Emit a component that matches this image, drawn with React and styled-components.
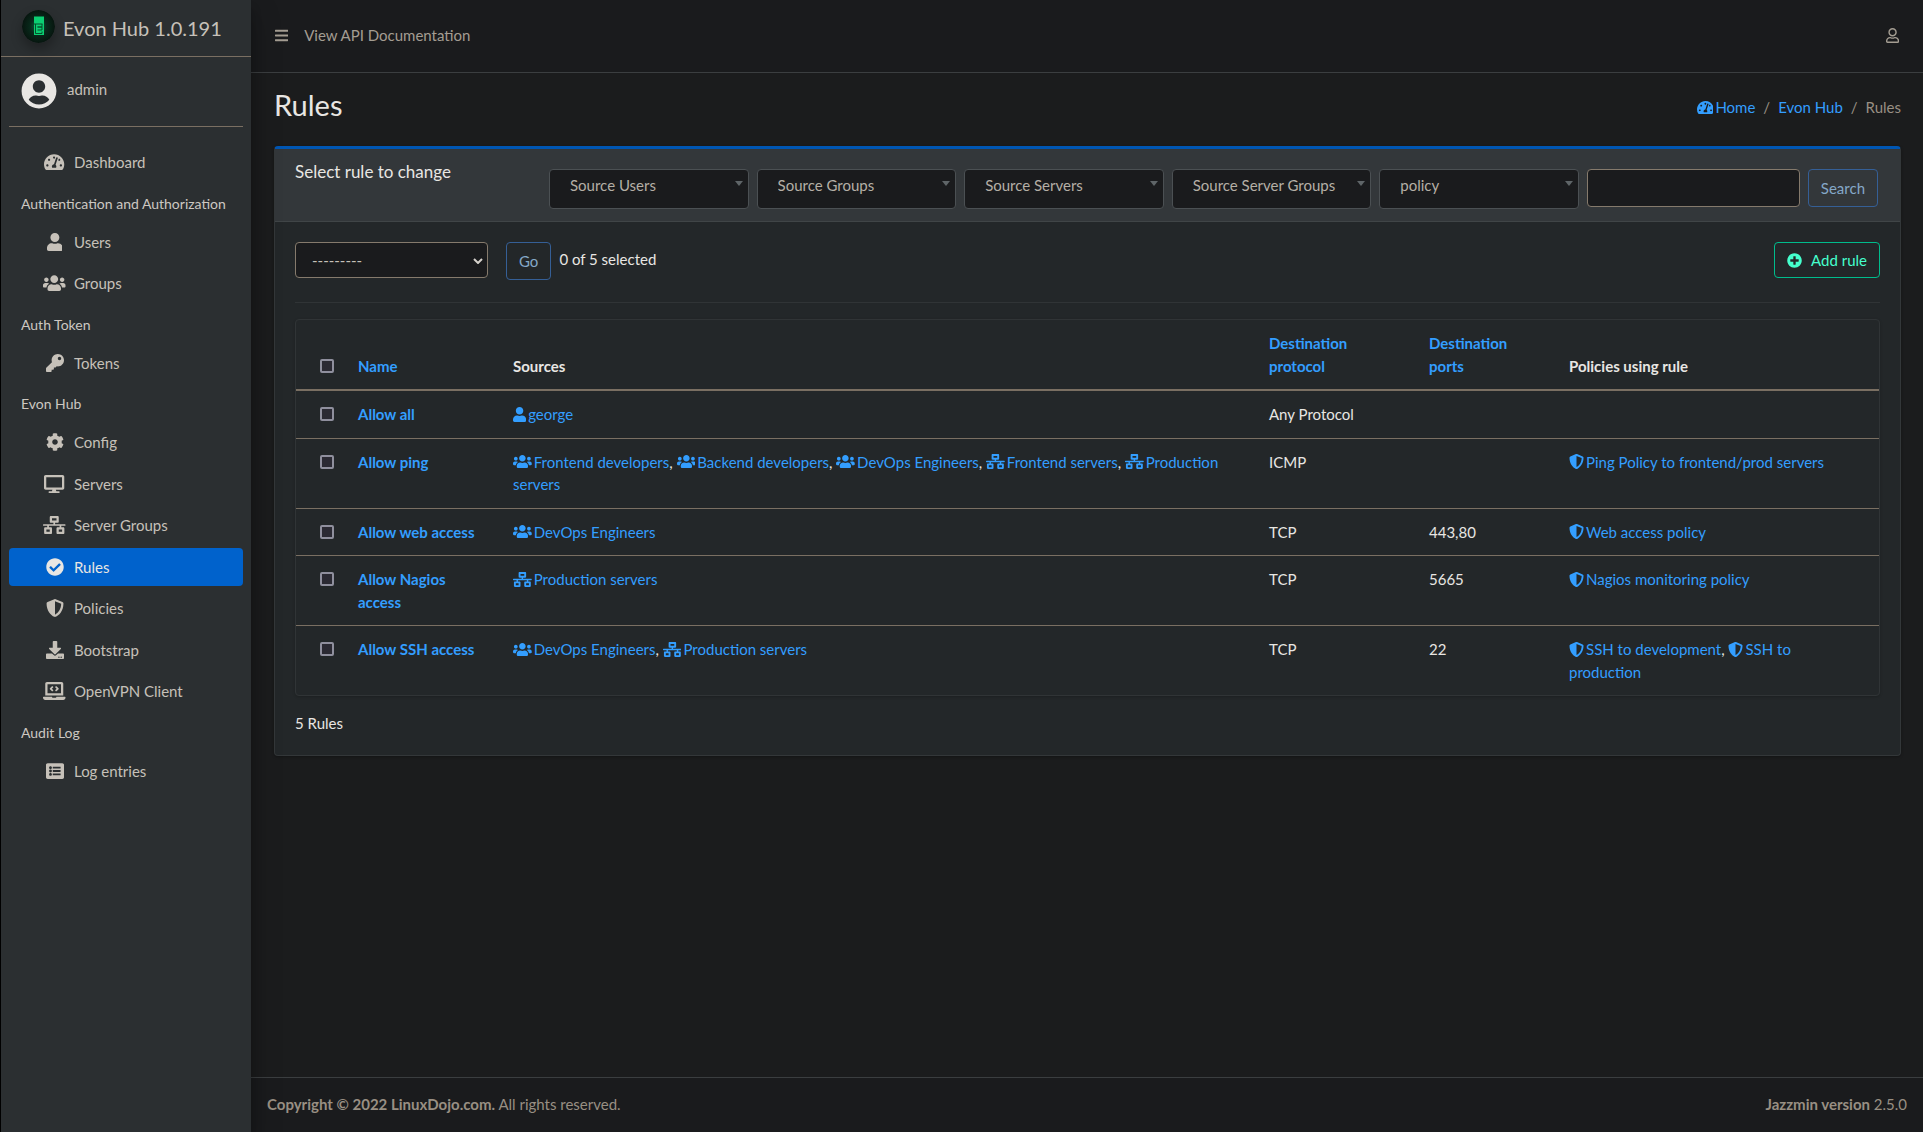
import React, { useState } from "react";
import styled, { createGlobalStyle } from "styled-components";
//Icons
import {
  FaBars,
  FaCheckCircle,
  FaCog,
  FaDesktop,
  FaDownload,
  FaKey,
  FaLaptopCode,
  FaListAlt,
  FaNetworkWired,
  FaPlusCircle,
  FaRegUser,
  FaShieldAlt,
  FaTachometerAlt,
  FaUser,
  FaUserCircle,
  FaUsers,
} from "react-icons/fa";

const menu = [
  { items: [{ label: "Dashboard", icon: FaTachometerAlt }] },
  {
    title: "Authentication and Authorization",
    items: [
      { label: "Users", icon: FaUser },
      { label: "Groups", icon: FaUsers },
    ],
  },
  { title: "Auth Token", items: [{ label: "Tokens", icon: FaKey }] },
  {
    title: "Evon Hub",
    items: [
      { label: "Config", icon: FaCog },
      { label: "Servers", icon: FaDesktop },
      { label: "Server Groups", icon: FaNetworkWired },
      { label: "Rules", icon: FaCheckCircle, active: true },
      { label: "Policies", icon: FaShieldAlt },
      { label: "Bootstrap", icon: FaDownload },
      { label: "OpenVPN Client", icon: FaLaptopCode },
    ],
  },
  { title: "Audit Log", items: [{ label: "Log entries", icon: FaListAlt }] },
];

const filters = [
  "Source Users",
  "Source Groups",
  "Source Servers",
  "Source Server Groups",
  "policy",
];

const kinds = {
  user: FaUser,
  group: FaUsers,
  servers: FaNetworkWired,
  policy: FaShieldAlt,
};

const rules = [
  {
    name: "Allow all",
    sources: [["user", "george"]],
    protocol: "Any Protocol",
    ports: "",
    policies: [],
  },
  {
    name: "Allow ping",
    sources: [
      ["group", "Frontend developers"],
      ["group", "Backend developers"],
      ["group", "DevOps Engineers"],
      ["servers", "Frontend servers"],
      ["servers", "Production servers"],
    ],
    protocol: "ICMP",
    ports: "",
    policies: [["policy", "Ping Policy to frontend/prod servers"]],
  },
  {
    name: "Allow web access",
    sources: [["group", "DevOps Engineers"]],
    protocol: "TCP",
    ports: "443,80",
    policies: [["policy", "Web access policy"]],
  },
  {
    name: "Allow Nagios access",
    sources: [["servers", "Production servers"]],
    protocol: "TCP",
    ports: "5665",
    policies: [["policy", "Nagios monitoring policy"]],
  },
  {
    name: "Allow SSH access",
    sources: [
      ["group", "DevOps Engineers"],
      ["servers", "Production servers"],
    ],
    protocol: "TCP",
    ports: "22",
    policies: [
      ["policy", "SSH to development"],
      ["policy", "SSH to production"],
    ],
  },
];

function App() {
  const [selected, setSelected] = useState([]);

  const toggle = (name) =>
    setSelected((prev) =>
      prev.includes(name) ? prev.filter((n) => n !== name) : [...prev, name]
    );
  const toggleAll = () =>
    setSelected(selected.length === rules.length ? [] : rules.map((r) => r.name));

  return (
    <>
      <GlobalStyle />
      <Layout>
        <Sidebar />
        <Page>
          <Navbar>
            <button type="button" aria-label="Toggle sidebar">
              <FaBars />
            </button>
            <a href="#docs">View API Documentation</a>
            <button type="button" aria-label="Account">
              <FaRegUser />
            </button>
          </Navbar>
          <Content>
            <PageHeader>
              <h1>Rules</h1>
              <Breadcrumb>
                <li>
                  <IconLink href="#home">
                    <FaTachometerAlt />
                    Home
                  </IconLink>
                </li>
                <li>
                  <a href="#evon">Evon Hub</a>
                </li>
                <li>Rules</li>
              </Breadcrumb>
            </PageHeader>
            <Card>
              <CardHeader>
                <h2>Select rule to change</h2>
                <Search onSubmit={(e) => e.preventDefault()}>
                  <Filters>
                    {filters.map((name) => (
                      <FilterBox key={name}>
                        <select aria-label={name}>
                          <option>{name}</option>
                        </select>
                      </FilterBox>
                    ))}
                  </Filters>
                  <SearchInput type="text" aria-label="Search rules" />
                  <OutlineButton type="submit">Search</OutlineButton>
                </Search>
              </CardHeader>
              <CardBody>
                <Actions>
                  <ActionBox>
                    <select aria-label="Action">
                      <option>---------</option>
                    </select>
                    <svg width="10" height="6" viewBox="0 0 10 6">
                      <path d="M1 1l4 4 4-4" />
                    </svg>
                  </ActionBox>
                  <OutlineButton type="button">Go</OutlineButton>
                  <span>
                    {selected.length} of {rules.length} selected
                  </span>
                  <AddLink href="#add">
                    <FaPlusCircle />
                    Add rule
                  </AddLink>
                </Actions>
                <TableCard>
                  <Table>
                    <colgroup>
                      <col width="50" />
                      <col width="155" />
                      <col />
                      <col width="160" />
                      <col width="140" />
                      <col width="322" />
                    </colgroup>
                    <thead>
                      <tr>
                        <th>
                          <Check
                            type="checkbox"
                            aria-label="Select all rules"
                            checked={selected.length === rules.length}
                            onChange={toggleAll}
                          />
                        </th>
                        <th>
                          <a href="#name">Name</a>
                        </th>
                        <th>Sources</th>
                        <th>
                          <a href="#protocol">Destination protocol</a>
                        </th>
                        <th>
                          <a href="#ports">Destination ports</a>
                        </th>
                        <th>Policies using rule</th>
                      </tr>
                    </thead>
                    <tbody>
                      {rules.map((rule) => (
                        <tr key={rule.name}>
                          <td>
                            <Check
                              type="checkbox"
                              aria-label={rule.name}
                              checked={selected.includes(rule.name)}
                              onChange={() => toggle(rule.name)}
                            />
                          </td>
                          <th scope="row">
                            <a href="#rule">{rule.name}</a>
                          </th>
                          <td>
                            <Links list={rule.sources} />
                          </td>
                          <td>{rule.protocol}</td>
                          <td>{rule.ports}</td>
                          <td>
                            <Links list={rule.policies} />
                          </td>
                        </tr>
                      ))}
                    </tbody>
                  </Table>
                </TableCard>
                <p>{rules.length} Rules</p>
              </CardBody>
            </Card>
          </Content>
          <Footer>
            <span>
              <strong>Copyright © 2022 LinuxDojo.com.</strong> All rights
              reserved.
            </span>
            <span>
              <strong>Jazzmin version</strong> 2.5.0
            </span>
          </Footer>
        </Page>
      </Layout>
    </>
  );
}

//Sidebar component
const Sidebar = () => {
  return (
    <Side>
      <Brand href="#home">
        <Logo />
        Evon Hub 1.0.191
      </Brand>
      <UserPanel href="#admin">
        <FaUserCircle />
        <span>admin</span>
      </UserPanel>
      <nav>
        {menu.map(({ title, items }, i) => (
          <React.Fragment key={i}>
            {title && <NavTitle>{title}</NavTitle>}
            {items.map(({ label, icon: Icon, active }) => (
              <NavLink href="#nav" key={label} $active={active}>
                <i>
                  <Icon />
                </i>
                {label}
              </NavLink>
            ))}
          </React.Fragment>
        ))}
      </nav>
    </Side>
  );
};

//Comma separated links, each with its icon
const Links = ({ list }) =>
  list.map(([kind, label], i) => {
    const Icon = kinds[kind];
    return (
      <React.Fragment key={label}>
        {i > 0 && ", "}
        <IconLink href={`#${kind}`}>
          <Icon />
          {label}
        </IconLink>
      </React.Fragment>
    );
  });

const Logo = () => (
  <LogoSvg viewBox="0 0 33 33">
    <defs>
      <radialGradient id="glow">
        <stop offset="0" stopColor="#0a6b3f" />
        <stop offset="0.5" stopColor="#082a1b" />
        <stop offset="1" stopColor="#07150f" />
      </radialGradient>
    </defs>
    <circle cx="16.5" cy="16.5" r="16.5" fill="url(#glow)" />
    <path fill="#0bcf72" d="M12 6.5h10V25H12z" />
    <path
      fill="none"
      stroke="#05512d"
      d="M12 14h8.500M20 14v3h-4.500M15.500 17h4.500v3h-4.500M13.500 14v9.500h6.500v-2"
    />
  </LogoSvg>
);

const GlobalStyle = createGlobalStyle`
  * {
    box-sizing: border-box;
    margin: 0;
    padding: 0;
  }
  body {
    background: #1b1c1d;
    color: #e8e6e3;
    font-family: Lato, "Liberation Sans", sans-serif;
    font-size: 15px;
    line-height: 1.5;
  }
  a {
    color: #339eff;
    text-decoration: none;
  }
  button, input, select {
    font: inherit;
  }
  svg {
    height: 1em;
    vertical-align: -0.125em;
  }
  svg[viewBox="0 0 448 512"] {
    width: 0.875em;
  }
  svg[viewBox="0 0 576 512"] {
    width: 1.125em;
  }
  svg[viewBox="0 0 640 512"] {
    width: 1.25em;
  }
`;

const Layout = styled.div`
  display: flex;
  min-height: 100vh;
  border-left: 1px solid #000;
`;

const Side = styled.aside`
  flex: 0 0 250px;
  min-width: 0;
  background: #2b2f31;
  z-index: 1;
  box-shadow: 0 14px 28px rgba(0, 0, 0, 0.25), 0 10px 10px rgba(0, 0, 0, 0.22);
  nav {
    padding: 16px 8px;
  }
`;

const Brand = styled.a`
  display: flex;
  align-items: center;
  gap: 8px;
  height: 57px;
  padding: 0 21px;
  border-bottom: 1px solid #7a6f62;
  color: #c6c1b9;
  font-size: 20px;
  white-space: nowrap;
`;

const LogoSvg = styled.svg`
  width: 33px;
  height: 33px;
  margin-bottom: 4px;
  border-radius: 50%;
  box-shadow: 0 6px 12px rgba(0, 0, 0, 0.3);
`;

const UserPanel = styled.a`
  display: flex;
  align-items: flex-start;
  gap: 10px;
  height: 70px;
  margin: 0 8px;
  padding: 16px 12px;
  border-bottom: 1px solid #7a6f62;
  color: #c6c1b9;
  svg {
    width: 36px;
    height: 36px;
    color: #e8e6e3;
  }
  span {
    padding: 5px 0;
  }
`;

const NavTitle = styled.h3`
  padding: 8px 12px 9px;
  color: #cdc8c2;
  font-size: 14px;
  font-weight: 400;
  white-space: nowrap;
`;

const NavLink = styled.a`
  display: flex;
  align-items: center;
  gap: 6px;
  margin-bottom: 3px;
  padding: 8px 32px;
  border-radius: 4px;
  background: ${(props) => (props.$active ? "#0062cc" : "none")};
  color: ${(props) => (props.$active ? "#e8e6e3" : "#c6c1b9")};
  i {
    display: flex;
    justify-content: center;
    align-items: center;
    width: 27px;
    height: 20px;
    font-size: 18px;
  }
`;

const IconLink = styled.a`
  svg {
    margin-right: 2px;
  }
`;

const Page = styled.div`
  flex: 1;
  display: flex;
  flex-direction: column;
  min-width: 0;
`;

const Navbar = styled.header`
  display: flex;
  align-items: center;
  gap: 16px;
  height: 73px;
  padding: 0 24px 2px;
  border-bottom: 1px solid #3b3e40;
  background: #1a1b1d;
  a,
  button {
    color: #a49d92;
  }
  button {
    border: 0;
    background: none;
  }
  button:last-child {
    margin-left: auto;
  }
`;

const Content = styled.main`
  flex: 1;
  padding: 0 22px 0 23px;
`;

const PageHeader = styled.div`
  display: flex;
  justify-content: space-between;
  align-items: center;
  height: 73px;
  padding-bottom: 5px;
  h1 {
    padding-bottom: 4px;
    font-size: 29px;
    font-weight: 400;
  }
`;

const Breadcrumb = styled.ol`
  display: flex;
  list-style: none;
  color: #988f83;
  li + li::before {
    content: "/";
    padding: 0 8px;
  }
`;

const Card = styled.section`
  border: 1px solid #333739;
  border-top: 3px solid #0056b3;
  border-radius: 4px;
  background: #232729;
  box-shadow: 0 1px 3px rgba(0, 0, 0, 0.3);
`;

const CardHeader = styled.div`
  display: flex;
  gap: 24px;
  padding: 12px 22px 12px 20px;
  border-bottom: 1px solid #404547;
  background: #33373a;
  h2 {
    flex: 0 0 230px;
    font-size: 17px;
    font-weight: 400;
    line-height: 22px;
  }
`;

const Search = styled.form`
  flex: 1;
  display: flex;
  align-items: flex-start;
  gap: 8px;
  padding-top: 8px;
`;

const Filters = styled.div`
  flex: 1;
  display: grid;
  grid-template-columns: repeat(5, 1fr);
  gap: 8px;
`;

const FilterBox = styled.div`
  position: relative;
  select {
    width: 100%;
    height: 40px;
    padding: 0 20px 8px;
    border: 1px solid #4b5053;
    border-radius: 4px;
    background: #1a1b1d;
    color: #b5afa6;
    appearance: none;
  }
  &::after {
    content: "";
    position: absolute;
    top: 12px;
    right: 6px;
    border: 4px solid transparent;
    border-top: 5px solid #5f6568;
    border-bottom: 0;
  }
`;

const SearchInput = styled.input`
  width: 213px;
  height: 38px;
  padding: 0 16px;
  border: 1px solid #857a6c;
  border-radius: 4px;
  background: #1a1b1d;
  color: #e8e6e3;
`;

const OutlineButton = styled.button`
  height: 38px;
  padding: 0 12px;
  border: 1px solid #355f96;
  border-radius: 4px;
  background: none;
  color: #85a8c8;
`;

const CardBody = styled.div`
  padding: 20px;
`;

const Actions = styled.div`
  display: flex;
  align-items: flex-start;
  gap: 8px;
  padding-bottom: 22px;
  border-bottom: 1px solid #303436;
  line-height: 34px;
  ${OutlineButton} {
    margin-left: 10px;
  }
`;

const ActionBox = styled.div`
  position: relative;
  select {
    display: block;
    width: 193px;
    height: 36px;
    padding: 0 16px;
    border: 1px solid #857a6c;
    border-radius: 4px;
    background: #1a1b1d;
    color: #c6c1b9;
    appearance: none;
  }
  svg {
    position: absolute;
    top: 16px;
    right: 5px;
    height: 6px;
    fill: none;
    stroke: #d5d1cb;
    stroke-width: 2;
    pointer-events: none;
  }
`;

const AddLink = styled.a`
  display: flex;
  align-items: center;
  gap: 9px;
  height: 36px;
  margin-left: auto;
  padding: 0 12px;
  border: 1px solid #00bc8c;
  border-radius: 4px;
  color: #45ffcd;
`;

const TableCard = styled.div`
  margin: 16px 0;
  border: 1px solid #303436;
  border-radius: 4px;
  box-shadow: 0 1px 3px rgba(0, 0, 0, 0.2);
`;

const Table = styled.table`
  width: 100%;
  table-layout: fixed;
  border-collapse: collapse;
  th,
  td {
    padding: 12px;
    text-align: left;
    vertical-align: top;
  }
  th:first-child,
  td:first-child {
    padding-left: 24px;
  }
  th:last-child,
  td:last-child {
    padding-right: 24px;
  }
  thead th {
    vertical-align: bottom;
    border-bottom: 2px solid #7a6f62;
  }
  tbody tr + tr {
    border-top: 1px solid #7a6f62;
  }
`;

const Check = styled.input`
  display: block;
  width: 14px;
  height: 14px;
  margin: 4px 0;
  border: 2px solid #8f8f9d;
  border-radius: 2px;
  background: #2b2a33;
  appearance: none;
  &:checked {
    background: #339eff;
  }
`;

const Footer = styled.footer`
  display: flex;
  justify-content: space-between;
  padding: 15px 16px 17px;
  border-top: 1px solid #3b3e40;
  background: #1a1b1d;
  color: #988f83;
`;

export default App;
